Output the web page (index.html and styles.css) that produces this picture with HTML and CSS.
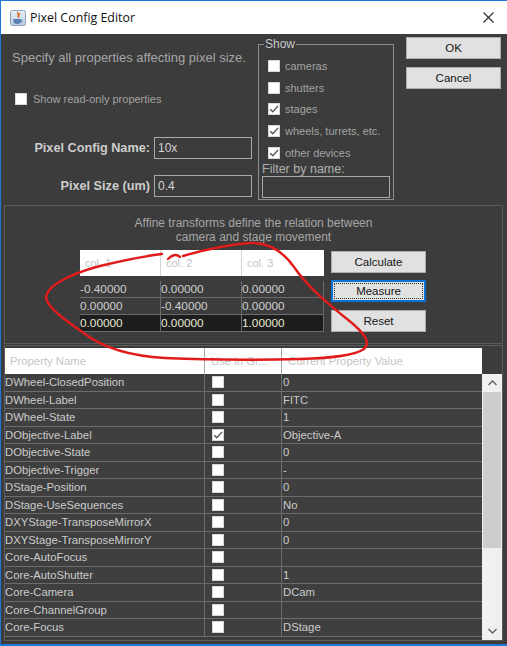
FILE: index.html
```html
<!DOCTYPE html>
<html>
<head>
<meta charset="utf-8">
<title>Pixel Config Editor</title>
<link rel="stylesheet" href="styles.css">
</head>
<body>
<div class="window">
  <div class="titlebar">
    <svg class="app-icon" width="16" height="16" viewBox="0 0 16 16">
      <defs>
        <linearGradient id="ig" x1="0" y1="0" x2="0" y2="1">
          <stop offset="0" stop-color="#e9f0f8"/>
          <stop offset="1" stop-color="#b9cbe0"/>
        </linearGradient>
      </defs>
      <rect x="0.5" y="0.5" width="15" height="15" rx="2" fill="url(#ig)" stroke="#8ea2bb"/>
      <path d="M8 2 C6 4 10 5 8 7.5 C10 6 8 4.5 10 3" fill="none" stroke="#e0641c" stroke-width="1.3"/>
      <path d="M3.5 9 H11 V11.5 C11 13 9.5 14 7.2 14 C5 14 3.5 13 3.5 11.5 Z" fill="#5b7fae"/>
      <path d="M11 9.8 C13 9.8 13 12 11 12" fill="none" stroke="#5b7fae" stroke-width="1"/>
    </svg>
    <span class="title">Pixel Config Editor</span>
    <svg class="close" width="11" height="11" viewBox="0 0 11 11">
      <path d="M0.5 0.5 L10.5 10.5 M10.5 0.5 L0.5 10.5" stroke="#2b2b2b" stroke-width="1.1"/>
    </svg>
  </div>

  <div class="content">
    <div class="top">
      <div class="left">
        <div class="intro">Specify all properties affecting pixel size.</div>
        <div class="readonly"><span class="cb"></span><span>Show read-only properties</span></div>
        <div class="fields">
          <span class="flabel">Pixel Config Name:</span>
          <span class="input">10x</span>
          <span class="flabel">Pixel Size (um)</span>
          <span class="input">0.4</span>
        </div>
      </div>

      <fieldset class="show">
        <legend>Show</legend>
        <div class="opts">
          <div class="opt"><span class="cb"></span>cameras</div>
          <div class="opt"><span class="cb"></span>shutters</div>
          <div class="opt"><span class="cb checked"><svg width="12" height="12" viewBox="0 0 12 12"><path d="M2.2 6.2 L4.8 8.8 L10 3" fill="none" stroke="#5a5a5a" stroke-width="1.4"/></svg></span>stages</div>
          <div class="opt"><span class="cb checked"><svg width="12" height="12" viewBox="0 0 12 12"><path d="M2.2 6.2 L4.8 8.8 L10 3" fill="none" stroke="#5a5a5a" stroke-width="1.4"/></svg></span>wheels, turrets, etc.</div>
          <div class="opt"><span class="cb checked"><svg width="12" height="12" viewBox="0 0 12 12"><path d="M2.2 6.2 L4.8 8.8 L10 3" fill="none" stroke="#5a5a5a" stroke-width="1.4"/></svg></span>other devices</div>
        </div>
        <div class="filter-label">Filter by name:</div>
        <div class="filter-input"></div>
      </fieldset>

      <div class="actions">
        <div class="btn">OK</div>
        <div class="btn">Cancel</div>
      </div>
    </div>

    <div class="affine">
      <p class="affine-text">Affine transforms define the relation between<br>camera and stage movement</p>
      <div class="affine-row">
        <div class="matrix">
          <div class="mhead">
            <span>col. 1</span><span>col. 2</span><span>col. 3</span>
          </div>
          <div class="mbody">
            <div class="mrow"><span>-0.40000</span><span>0.00000</span><span>0.00000</span></div>
            <div class="mrow"><span>0.00000</span><span>-0.40000</span><span>0.00000</span></div>
            <div class="mrow sel"><span>0.00000</span><span>0.00000</span><span>1.00000</span></div>
          </div>
        </div>
        <div class="mbtns">
          <div class="btn">Calculate</div>
          <div class="btn focus">Measure</div>
          <div class="btn">Reset</div>
        </div>
      </div>
    </div>

    <div class="props">
      <div class="phead">
        <span class="c1">Property Name</span>
        <span class="c2">Use in Gr...</span>
        <span class="c3">Current Property Value</span>
      </div>
      <div class="pbody">
        <div class="rows">
          <div class="prow"><span class="c1">DWheel-ClosedPosition</span><span class="c2"><i class="cb"></i></span><span class="c3">0</span></div>
          <div class="prow"><span class="c1">DWheel-Label</span><span class="c2"><i class="cb"></i></span><span class="c3">FITC</span></div>
          <div class="prow"><span class="c1">DWheel-State</span><span class="c2"><i class="cb"></i></span><span class="c3">1</span></div>
          <div class="prow"><span class="c1">DObjective-Label</span><span class="c2"><i class="cb checked"><svg width="12" height="12" viewBox="0 0 12 12"><path d="M2.2 6.2 L4.8 8.8 L10 3" fill="none" stroke="#5a5a5a" stroke-width="1.4"/></svg></i></span><span class="c3">Objective-A</span></div>
          <div class="prow"><span class="c1">DObjective-State</span><span class="c2"><i class="cb"></i></span><span class="c3">0</span></div>
          <div class="prow"><span class="c1">DObjective-Trigger</span><span class="c2"><i class="cb"></i></span><span class="c3">-</span></div>
          <div class="prow"><span class="c1">DStage-Position</span><span class="c2"><i class="cb"></i></span><span class="c3">0</span></div>
          <div class="prow"><span class="c1">DStage-UseSequences</span><span class="c2"><i class="cb"></i></span><span class="c3">No</span></div>
          <div class="prow"><span class="c1">DXYStage-TransposeMirrorX</span><span class="c2"><i class="cb"></i></span><span class="c3">0</span></div>
          <div class="prow"><span class="c1">DXYStage-TransposeMirrorY</span><span class="c2"><i class="cb"></i></span><span class="c3">0</span></div>
          <div class="prow"><span class="c1">Core-AutoFocus</span><span class="c2"><i class="cb"></i></span><span class="c3"></span></div>
          <div class="prow"><span class="c1">Core-AutoShutter</span><span class="c2"><i class="cb"></i></span><span class="c3">1</span></div>
          <div class="prow"><span class="c1">Core-Camera</span><span class="c2"><i class="cb"></i></span><span class="c3">DCam</span></div>
          <div class="prow"><span class="c1">Core-ChannelGroup</span><span class="c2"><i class="cb"></i></span><span class="c3"></span></div>
          <div class="prow"><span class="c1">Core-Focus</span><span class="c2"><i class="cb"></i></span><span class="c3">DStage</span></div>
        </div>
        <div class="scrollbar">
          <div class="sb-btn"><svg width="9" height="6" viewBox="0 0 9 6"><path d="M0.5 5 L4.5 1 L8.5 5" fill="none" stroke="#606060" stroke-width="1.3"/></svg></div>
          <div class="sb-thumb"></div>
          <div class="sb-track"></div>
          <div class="sb-btn"><svg width="9" height="6" viewBox="0 0 9 6"><path d="M0.5 1 L4.5 5 L8.5 1" fill="none" stroke="#606060" stroke-width="1.3"/></svg></div>
        </div>
      </div>
    </div>
  </div>

  <svg class="annotation" width="507" height="646" viewBox="0 0 507 646">
    <path d="M168 259 C172 255 176 253 180 257 M183 256 C200 251 225 245 250 243 C268 242 282 250 294 267 C307 286 324 300 342 315 C360 329 373 341 364 349 C354 356 330 358 300 359 C260 360 210 360 165 358 C130 356 105 349 85 334 C65 320 48 308 46 298 C46 286 70 274 100 266 C125 260 145 256 162 254"
      fill="none" stroke="#e11b1b" stroke-width="2.4" stroke-linecap="round" stroke-linejoin="round"/>
  </svg>
</div>
</body>
</html>
```

FILE: styles.css
```css
* { box-sizing: border-box; }

body {
  margin: 0;
  background: #ffffff;
  font-family: "Liberation Sans", Arial, sans-serif;
}

.window {
  width: 507px;
  height: 646px;
  border-left: 1px solid #1c78d4;
  border-top: 1px solid #1c78d4;
  border-bottom: 2px solid #1c78d4;
  background: #3c3c3c;
  display: flex;
  flex-direction: column;
  position: relative;
  overflow: hidden;
}

/* Title bar */
.titlebar {
  height: 33px;
  flex: none;
  background: #ffffff;
  display: flex;
  align-items: center;
}
.app-icon { margin-left: 9px; flex: none; }
.title {
  margin-left: 4px;
  font-family: "Open Sans", "Noto Sans", sans-serif;
  font-size: 12.4px;
  color: #111;
}
.close { margin-left: auto; margin-right: 13px; }

.content {
  flex: 1;
  display: flex;
  flex-direction: column;
  min-height: 0;
}

/* Top section */
.top {
  height: 171px;
  flex: none;
  display: flex;
}
.left {
  width: 257px;
  padding-left: 11px;
}
.intro {
  margin-top: 16px;
  font-size: 13px;
  line-height: 15px;
  color: #a6a6a6;
}
.readonly {
  margin-top: 27px;
  height: 13px;
  display: flex;
  align-items: center;
  font-size: 11px;
  color: #a3a3a3;
}
.readonly .cb { margin-left: 3px; margin-right: 6px; }

.cb {
  display: inline-block;
  width: 12px;
  height: 12px;
  flex: none;
  background: #ffffff;
  border: 1px solid #d8d8d8;
  position: relative;
}
.cb svg { position: absolute; left: -1px; top: -1px; }

.fields {
  margin-top: 32px;
  display: grid;
  grid-template-columns: 138px 98px;
  column-gap: 4px;
  row-gap: 16px;
  align-items: center;
}
.flabel {
  text-align: right;
  font-weight: bold;
  font-size: 12.7px;
  color: #cdcdcd;
}
.input {
  height: 22px;
  border: 1px solid #a9a9a9;
  padding-left: 3px;
  font-size: 12px;
  line-height: 20px;
  color: #d2d2d2;
}

/* Show group */
.show {
  margin: 3px 0 0 0;
  padding: 0;
  width: 136px;
  height: 163px;
  border: 1px solid #8e8e8e;
  min-width: 0;
}
.show legend {
  margin-left: 5px;
  padding: 0 1px;
  font-size: 12px;
  line-height: 14px;
  color: #c8c8c8;
}
.opts { margin-top: 4px; }
.opt {
  height: 21.7px;
  display: flex;
  align-items: center;
  padding-left: 9px;
  font-size: 11px;
  color: #a3a3a3;
}
.opt .cb { margin-right: 5px; }
.filter-label {
  margin-left: 3px;
  font-size: 12.5px;
  line-height: 13px;
  color: #b0b0b0;
}
.filter-input {
  margin-left: 3px;
  width: 128px;
  height: 22px;
  border: 1px solid #a9a9a9;
}

/* Action buttons */
.actions {
  margin-left: 12px;
  margin-top: 3px;
  width: 95px;
  display: flex;
  flex-direction: column;
  gap: 8px;
}
.btn {
  height: 22px;
  background: #e1e1e1;
  border: 1px solid #adadad;
  display: flex;
  align-items: center;
  justify-content: center;
  font-size: 11.5px;
  color: #151515;
}
.btn.focus {
  border: 1px solid #0a74d4;
  box-shadow: inset 0 0 0 1px #0a74d4;
  outline: 1px dotted #333;
  outline-offset: -4px;
}

/* Affine panel */
.affine {
  flex: none;
  margin: 0 4px 0 3px;
  height: 139px;
  border: 1px solid #5b5b5b;
  padding-top: 10px;
}
.affine-text {
  margin: 0;
  text-align: center;
  font-size: 12px;
  line-height: 14.4px;
  color: #a6a6a6;
}
.affine-row {
  margin-top: 5px;
  padding-left: 75px;
  display: flex;
}
.matrix { width: 244px; }
.mhead {
  height: 26px;
  background: #ffffff;
  display: grid;
  grid-template-columns: 81px 81px 82px;
}
.mhead span {
  padding-left: 5px;
  font-size: 11px;
  line-height: 26px;
  color: #c3c3c3;
  border-right: 1px solid #d4d4d4;
}
.mhead span:last-child { border-right: none; }
.mbody { margin-top: 5px; }
.mrow {
  height: 17px;
  display: grid;
  grid-template-columns: 81px 81px 82px;
}
.mrow span {
  border-right: 1px solid #6b6b6b;
  border-bottom: 1px solid #6b6b6b;
  font-size: 11.8px;
  line-height: 16px;
  color: #cfcfcf;
}
.mrow.sel span {
  background: #1d1d1d;
  color: #e8e8cf;
}
.mbtns {
  margin-left: 7px;
  margin-top: 1px;
  width: 95px;
  display: flex;
  flex-direction: column;
  gap: 7.5px;
}

/* Property table */
.props {
  flex: 1;
  min-height: 0;
  margin: 1px 4px 3px 3px;
  border: 1px solid #5b5b5b;
  padding: 2px 0 0 0;
  display: flex;
  flex-direction: column;
}
.phead {
  height: 26px;
  flex: none;
  display: flex;
}
.phead span {
  background: #ffffff;
  font-size: 11.3px;
  line-height: 26px;
  color: #c5c5c5;
  border-right: 1px solid #a8a8a8;
  white-space: nowrap;
  overflow: hidden;
}
.phead .c1 { width: 200px; padding-left: 5px; }
.phead .c2 { width: 77px; padding-left: 6px; }
.phead .c3 { width: 200px; padding-left: 6px; border-right: none; }

.c1 { width: 200px; }
.c2 { width: 77px; }
.c3 { width: 200px; }

.pbody {
  flex: 1;
  min-height: 0;
  display: flex;
}
.rows {
  width: 477px;
  overflow: hidden;
}
.prow {
  height: 17.5px;
  display: flex;
  background: #3f3f3f;
}
.prow span {
  border-bottom: 1px solid #6c6c6c;
  font-size: 11.3px;
  line-height: 16.5px;
  color: #cbcbcb;
  white-space: nowrap;
  overflow: hidden;
}
.prow .c1, .prow .c2 { border-right: 1px solid #6c6c6c; }
.prow .c2 {
  display: flex;
  align-items: center;
  padding-left: 7px;
}
.prow .c3 { padding-left: 1px; }

.scrollbar {
  width: 20px;
  display: flex;
  flex-direction: column;
  background: #f0f0f0;
}
.sb-btn {
  height: 18px;
  flex: none;
  display: flex;
  align-items: center;
  justify-content: center;
  background: #f0f0f0;
}
.sb-thumb {
  height: 156px;
  flex: none;
  background: #cdcdcd;
  margin: 0 1px;
}
.sb-track { flex: 1; }

.annotation {
  position: absolute;
  left: -1px;
  top: -1px;
  pointer-events: none;
}
```
